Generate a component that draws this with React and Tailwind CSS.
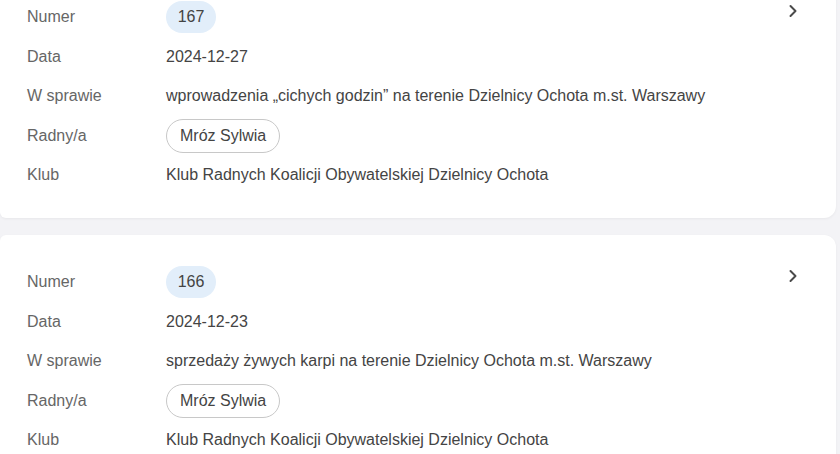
import React from "react";

const items = [
  {
    numer: "167",
    data: "2024-12-27",
    sprawa: "wprowadzenia „cichych godzin” na terenie Dzielnicy Ochota m.st. Warszawy",
    radny: "Mróz Sylwia",
    klub: "Klub Radnych Koalicji Obywatelskiej Dzielnicy Ochota",
  },
  {
    numer: "166",
    data: "2024-12-23",
    sprawa: "sprzedaży żywych karpi na terenie Dzielnicy Ochota m.st. Warszawy",
    radny: "Mróz Sylwia",
    klub: "Klub Radnych Koalicji Obywatelskiej Dzielnicy Ochota",
  },
];

const Row = ({ label, children }) => (
  <div className="flex items-center h-8">
    <div className="w-[139px] shrink-0 text-[#666]">{label}</div>
    <div className="text-[#444]">{children}</div>
  </div>
);

const Card = ({ item }) => (
  <div className="relative bg-white rounded-r-xl rounded-l-md shadow-[0_1px_3px_rgba(0,0,0,0.05)] pl-[27px] pt-[31px] pb-[27px]">
    <button className="absolute right-[31px] top-[29px] h-6 w-6 flex items-center justify-center text-[#4a4a4a]">
      <svg width="10" height="14" viewBox="0 0 10 14" fill="none">
        <path d="M2.5 2l5 5-5 5" stroke="currentColor" strokeWidth="2" strokeLinecap="round" strokeLinejoin="round" />
      </svg>
    </button>
    <div className="flex flex-col gap-[7.5px]">
      <Row label="Numer">
        <span className="inline-flex items-center justify-center h-8 w-[50px] rounded-full bg-[#e2eefa] text-[#444]">
          {item.numer}
        </span>
      </Row>
      <Row label="Data">{item.data}</Row>
      <Row label="W sprawie">{item.sprawa}</Row>
      <Row label="Radny/a">
        <span className="inline-flex items-center h-[34px] px-[13px] rounded-full border border-[#c8c8c8] text-[#444]">
          {item.radny}
        </span>
      </Row>
      <Row label="Klub">{item.klub}</Row>
    </div>
  </div>
);

export default function App() {
  return (
    <div className="h-screen bg-[#f3f3f6] overflow-hidden font-['Liberation_Sans',Arial,sans-serif] text-base">
      <div className="flex flex-col gap-[17px] -mt-[30px] pr-1">
        {items.map((item) => (
          <Card key={item.numer} item={item} />
        ))}
      </div>
    </div>
  );
}
